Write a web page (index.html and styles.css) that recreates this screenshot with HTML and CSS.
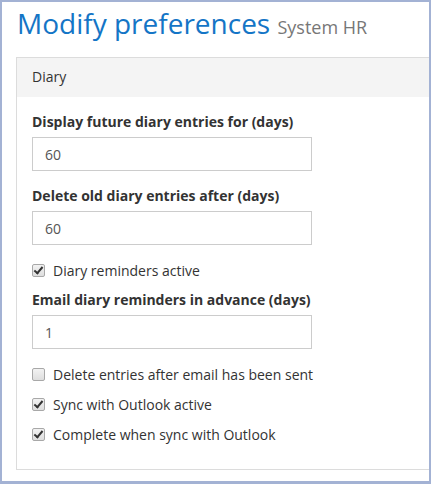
FILE: index.html
```html
<!DOCTYPE html>
<html>
<head>
<meta charset="utf-8">
<link rel="stylesheet" href="styles.css">
</head>
<body>
<div class="frame">
  <h1 class="title">Modify preferences <small class="subtitle">System HR</small></h1>
  <div class="panel">
    <div class="panel-head">Diary</div>
    <div class="panel-body">
      <div class="field">
        <label class="label">Display future diary entries for (days)</label>
        <input class="input" type="text" value="60">
      </div>
      <div class="field">
        <label class="label">Delete old diary entries after (days)</label>
        <input class="input" type="text" value="60">
      </div>
      <label class="check"><input type="checkbox" class="box" checked><span>Diary reminders active</span></label>
      <div class="field">
        <label class="label">Email diary reminders in advance (days)</label>
        <input class="input" type="text" value="1">
      </div>
      <label class="check"><input type="checkbox" class="box"><span>Delete entries after email has been sent</span></label>
      <label class="check"><input type="checkbox" class="box" checked><span>Sync with Outlook active</span></label>
      <label class="check"><input type="checkbox" class="box" checked><span>Complete when sync with Outlook</span></label>
    </div>
  </div>
</div>
</body>
</html>
```
FILE: styles.css
```css
html, body {
  margin: 0;
  padding: 0;
  background: #fff;
}
.frame {
  box-sizing: border-box;
  width: 431px;
  height: 484px;
  border: 2px solid #a3b2d4;
  border-bottom-width: 3px;
  overflow: hidden;
  font-family: "Open Sans", sans-serif;
  color: #333;
  padding: 0 0 0 14px;
}
.title {
  margin: 0;
  padding: 3px 0 0 1px;
  height: 51px;
  box-sizing: border-box;
  font-weight: 400;
  font-size: 28px;
  line-height: 36px;
  color: #1475c6;
  white-space: nowrap;
}
.subtitle {
  font-size: 18px;
  color: #777;
}
.panel {
  width: 440px;
  border: 1px solid #dcdcdc;
  background: #fff;
  margin-top: 4px;
}
.panel-head {
  background: #f4f4f4;
  height: 39px;
  line-height: 38px;
  padding-left: 15px;
  font-size: 14px;
}
.panel-body {
  padding: 15px 15px 15px 15px;
  display: flex;
  flex-direction: column;
}
.field {
  display: flex;
  flex-direction: column;
  margin-bottom: 15px;
}
.label {
  font-weight: 700;
  font-size: 14px;
  line-height: 20px;
  margin-bottom: 5px;
}
.input {
  box-sizing: border-box;
  width: 280px;
  height: 34px;
  border: 1px solid #ccc;
  border-radius: 0;
  padding: 0 12px;
  font-family: "Open Sans", sans-serif;
  font-size: 14px;
  color: #555;
  outline: none;
}
.check {
  display: flex;
  align-items: center;
  height: 20px;
  margin-bottom: 10px;
  font-size: 14px;
}
.box {
  -webkit-appearance: none;
  appearance: none;
  box-sizing: border-box;
  width: 13px;
  height: 13px;
  margin: 0 8px 0 0;
  border: 1px solid #a8a8a8;
  border-radius: 2px;
  background: linear-gradient(#f2f2f2, #dedede);
  position: relative;
}
.box:checked::after {
  content: "";
  position: absolute;
  left: 3px;
  top: 0px;
  width: 3px;
  height: 7px;
  border: solid #333;
  border-width: 0 2px 2px 0;
  transform: rotate(40deg);
}
```
